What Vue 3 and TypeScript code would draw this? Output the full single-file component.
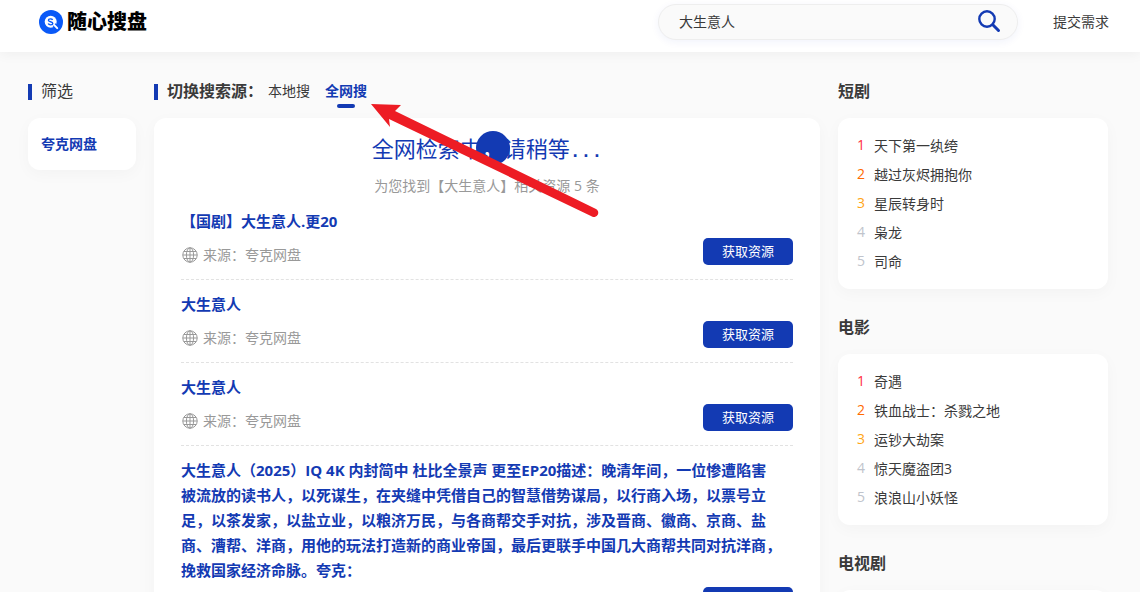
<script setup lang="ts">
import { ref } from 'vue'

interface Resource {
  title: string
  source: string
}

interface RankList {
  name: string
  items: string[]
}

const keyword = ref('大生意人')
const activeSource = ref('全网搜')
const sources: string[] = ['本地搜', '全网搜']

const resources: Resource[] = [
  { title: '【国剧】大生意人.更20', source: '夸克网盘' },
  { title: '大生意人', source: '夸克网盘' },
  { title: '大生意人', source: '夸克网盘' },
  {
    title: [
      '大生意人（2025）IQ 4K 内封简中 杜比全景声 更至EP20描述：晚清年间，一位惨遭陷害',
      '被流放的读书人，以死谋生，在夹缝中凭借自己的智慧借势谋局，以行商入场，以票号立',
      '足，以茶发家，以盐立业，以粮济万民，与各商帮交手对抗，涉及晋商、徽商、京商、盐',
      '商、漕帮、洋商，用他的玩法打造新的商业帝国，最后更联手中国几大商帮共同对抗洋商，',
      '挽救国家经济命脉。夸克：',
    ].join('\n'),
    source: '夸克网盘',
  },
]

const ranks: RankList[] = [
  { name: '短剧', items: ['天下第一纨绔', '越过灰烬拥抱你', '星辰转身时', '枭龙', '司命'] },
  { name: '电影', items: ['奇遇', '铁血战士：杀戮之地', '运钞大劫案', '惊天魔盗团3', '浪浪山小妖怪'] },
  { name: '电视剧', items: [] },
]
</script>

<template>
  <div class="page">
    <header class="topbar">
      <a class="logo" href="#">
        <svg class="logo-mark" viewBox="0 0 24 24" aria-hidden="true">
          <circle cx="12" cy="12" r="12" fill="#0a59f7" />
          <circle cx="11.7" cy="11.8" r="6" fill="#fff" />
          <path d="M15 14.6l4 4" stroke="#0a59f7" stroke-width="4" />
          <path d="M14.6 14.4l3.6 3.7" stroke="#fff" stroke-width="2" stroke-linecap="round" />
          <path d="M13.6 9.9c-.6-1.4-4.2-1.5-4.2.3 0 2 4.4 1 4.4 3.2 0 1.900-3.900 1.900-4.600.2" fill="none" stroke="#0a59f7" stroke-width="1.400" />
        </svg>
        <span class="logo-text">随心搜盘</span>
      </a>
      <form class="search" role="search" @submit.prevent>
        <input v-model="keyword" class="search-input" type="text" aria-label="搜索" />
        <button class="search-button" type="submit" aria-label="搜索">
          <svg viewBox="0 0 24 24" aria-hidden="true">
            <circle cx="10" cy="9" r="7.700" fill="none" stroke="#133ab3" stroke-width="2.400" />
            <path d="M15.800 14.800L21.500 20.500" stroke="#133ab3" stroke-width="3" stroke-linecap="round" />
          </svg>
        </button>
      </form>
      <a class="submit-link" href="#">提交需求</a>
    </header>

    <div class="layout">
      <aside>
        <h2 class="heading marked light">筛选</h2>
        <nav class="card filter"><a href="#">夸克网盘</a></nav>
      </aside>

      <main class="main">
        <div class="heading marked">
          <span class="source-label">切换搜索源：</span>
          <button
            v-for="item in sources"
            :key="item"
            type="button"
            class="source"
            :class="{ active: item === activeSource }"
            @click="activeSource = item"
          >{{ item }}</button>
        </div>
        <section class="card results">
          <p class="loading">全网检索中<span class="pulse">，</span>请稍等<span class="dots">...</span></p>
          <p class="summary">为您找到【大生意人】相关资源 5 条</p>
          <article v-for="(item, index) in resources" :key="index" class="resource">
            <h3>{{ item.title }}</h3>
            <div class="resource-row">
              <p class="origin">
                <svg viewBox="0 0 16 16" aria-hidden="true">
                  <g fill="none" stroke="#999" stroke-width="1">
                    <circle cx="8" cy="8" r="7.200" />
                    <ellipse cx="8" cy="8" rx="3.600" ry="7.200" />
                    <path d="M8 .8v14.400M.8 8h14.400M1.800 4.500h12.400M1.800 11.500h12.400" />
                  </g>
                </svg>
                来源：{{ item.source }}
              </p>
              <button class="get" type="button">获取资源</button>
            </div>
          </article>
        </section>
        <svg class="arrow" viewBox="0 0 230 120" aria-hidden="true">
          <path d="M1 4L31 5L25 11L226 109A4 4 0 0 1 222 116.500L19 19L20 27Z" fill="#ed1c24" />
        </svg>
      </main>

      <aside class="ranks">
        <section v-for="rank in ranks" :key="rank.name">
          <h2 class="heading">{{ rank.name }}</h2>
          <ol class="card rank">
            <li v-for="(item, index) in rank.items" :key="item">
              <span class="number" :class="'n' + (index + 1)">{{ index + 1 }}</span>
              <a href="#">{{ item }}</a>
            </li>
          </ol>
        </section>
      </aside>
    </div>
  </div>
</template>

<style>
html {
  background: #fafafa;
  scrollbar-width: none;
}
body {
  margin: 0;
}
</style>

<style scoped>
.page {
  min-height: 100vh;
  background: #fafafa;
  color: #3a3a3a;
  font-family: "Open Sans", "Noto Sans CJK SC", sans-serif;
  font-size: 14px;
}
.page * {
  box-sizing: border-box;
}
a {
  color: inherit;
  text-decoration: none;
}
button,
input {
  font: inherit;
  border: 0;
  padding: 0;
  background: none;
}
button {
  cursor: pointer;
}
h2,
h3,
p,
ol {
  margin: 0;
  padding: 0;
}
.topbar {
  display: flex;
  align-items: center;
  height: 52px;
  padding: 0 31px 8px 39px;
  background: #fff;
  box-shadow: 0 2px 12px rgba(0, 0, 0, 0.05);
}
.logo {
  display: flex;
  align-items: center;
  gap: 4px;
  margin-right: auto;
}
.logo-mark {
  width: 24px;
  height: 24px;
}
.logo-text {
  padding-bottom: 2px;
  color: #000;
  font-family: "Noto Sans CJK SC", sans-serif;
  font-size: 20px;
  font-weight: 900;
  line-height: 24px;
}
.search {
  display: flex;
  align-items: center;
  width: 360px;
  height: 36px;
  margin-right: 35px;
  padding: 0 16px 0 20px;
  border: 1px solid #eee;
  border-radius: 18px;
  background: #fafafa;
  box-shadow: 0 2px 8px rgba(19, 58, 179, 0.06);
}
.search-input {
  flex: 1;
  min-width: 0;
  padding-bottom: 2px;
  color: #3a3a3a;
  outline: 0;
}
.search-button {
  width: 24px;
  height: 24px;
}
.search-button svg {
  display: block;
}
.submit-link {
  padding-bottom: 2px;
}
.layout {
  display: grid;
  grid-template-columns: 108px minmax(0, 1fr) 270px;
  gap: 18px;
  padding: 26px 32px 0 28px;
}
.heading {
  display: flex;
  align-items: center;
  height: 26px;
  margin-bottom: 14px;
  padding-bottom: 2px;
  font-size: 16px;
  font-weight: 700;
}
.heading.light {
  font-weight: 400;
}
.marked::before {
  content: "";
  width: 4px;
  height: 16px;
  margin: 3px 9px 0 0;
  background: #133ab3;
}
.source-label {
  margin-right: 5px;
}
.card {
  border-radius: 12px;
  background: #fff;
  box-shadow: 0 4px 16px rgba(0, 0, 0, 0.03);
}
.filter {
  padding: 16px 13px;
  color: #133ab3;
  font-weight: 700;
  line-height: 20px;
}
.main {
  position: relative;
}
.source {
  position: relative;
  margin-right: 15px;
  color: #3a3a3a;
  font-size: 14px;
  font-weight: 400;
}
.source.active {
  color: #133ab3;
  font-weight: 700;
}
.source.active::after {
  content: "";
  position: absolute;
  bottom: -8px;
  left: 50%;
  width: 18px;
  height: 4px;
  margin-left: -9px;
  border-radius: 2px;
  background: #133ab3;
}
.results {
  padding: 14px 27px;
}
.loading {
  height: 34px;
  color: #133ab3;
  font-family: "Noto Sans CJK SC", sans-serif;
  font-size: 22px;
  line-height: 30px;
  text-align: center;
}
.pulse {
  position: relative;
  z-index: 0;
  color: #fff;
}
.pulse::before {
  content: "";
  position: absolute;
  z-index: -1;
  top: 50%;
  left: 50%;
  width: 34px;
  height: 34px;
  margin: -16px 0 0 -17px;
  border-radius: 50%;
  background: #133ab3;
}
.dots {
  font-family: "Liberation Mono", monospace;
  font-size: 18px;
  font-weight: 700;
}
.summary {
  margin-top: 10px;
  color: #999;
  line-height: 20px;
  text-align: center;
}
.resource {
  padding: 12px 0 14px;
  border-bottom: 1px dashed #e2e2e2;
}
.summary + .resource {
  margin-top: 1px;
}
.resource h3 {
  color: #133ab3;
  font-size: 15px;
  font-weight: 700;
  line-height: 25px;
  white-space: pre-line;
}
.resource-row {
  display: flex;
  align-items: flex-end;
  justify-content: space-between;
  margin-top: 4px;
}
.origin {
  display: flex;
  align-items: center;
  gap: 5px;
  padding-left: 1px;
  color: #999;
  line-height: 20px;
}
.origin svg {
  width: 16px;
  height: 16px;
}
.get {
  width: 90px;
  height: 27px;
  padding-bottom: 2px;
  border-radius: 5px;
  background: #133ab3;
  color: #fff;
  font-size: 13px;
  line-height: 20px;
}
.arrow {
  position: absolute;
  top: 22px;
  left: 216px;
  width: 230px;
  height: 120px;
  pointer-events: none;
}
.ranks {
  display: flex;
  flex-direction: column;
  gap: 25px;
}
.rank {
  padding: 12px 19px 14px;
  list-style: none;
}
.rank li {
  display: flex;
  align-items: center;
  gap: 9px;
  height: 29px;
}
.number {
  width: 8px;
  color: #c0c4cc;
}
.n1 {
  color: #ff3040;
}
.n2 {
  color: #ff6a00;
}
.n3 {
  color: #ffa516;
}
</style>
